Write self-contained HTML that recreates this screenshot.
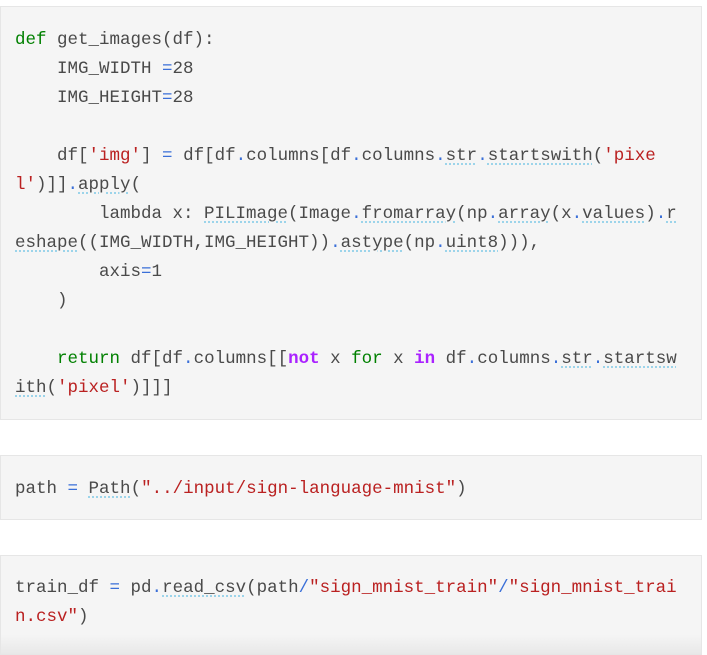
<!DOCTYPE html><html><head><style>
body{margin:0;background:#fff;width:707px;height:650px;overflow:hidden;position:relative;font-family:"Liberation Mono",monospace;}
.b{position:absolute;left:0;width:702px;background:#f5f5f5;border:1px solid #e6e6e6;box-sizing:border-box;}
.c{position:absolute;left:15px;font-size:17.5px;line-height:29px;color:#4a4a4a;white-space:pre;}
.k{color:#008000}.o{color:#3a6fd8}.s{color:#ba2121}.p{color:#aa22ff;font-weight:bold}
.u{text-decoration:underline dotted #8fd0e8;text-underline-offset:4px}
</style></head><body>
<div class="b" style="top:6px;height:414px"></div>
<div class="c" style="top:26px"><span class="k">def</span> get_images(df):
    IMG_WIDTH <span class="o">=</span>28
    IMG_HEIGHT<span class="o">=</span>28

    df[<span class="s">'img'</span>] <span class="o">=</span> df[df<span class="o">.</span>columns[df<span class="o">.</span>columns<span class="o">.</span><span class="u">str</span><span class="o">.</span><span class="u">startswith</span>(<span class="s">'pixe
l'</span>)]]<span class="o">.</span><span class="u">apply</span>(
        lambda x: <span class="u">PILImage</span>(Image<span class="o">.</span><span class="u">fromarray</span>(np<span class="o">.</span><span class="u">array</span>(x<span class="o">.</span><span class="u">values</span>)<span class="o">.</span><span class="u">r
eshape</span>((IMG_WIDTH,IMG_HEIGHT))<span class="o">.</span><span class="u">astype</span>(np<span class="o">.</span><span class="u">uint8</span>))),
        axis<span class="o">=</span>1
    )

    <span class="k">return</span> df[df<span class="o">.</span>columns[[<span class="p">not</span> x <span class="k">for</span> x <span class="p">in</span> df<span class="o">.</span>columns<span class="o">.</span><span class="u">str</span><span class="o">.</span><span class="u">startsw
ith</span>(<span class="s">'pixel'</span>)]]]</div>
<div class="b" style="top:455px;height:65px"></div>
<div class="c" style="top:475px">path <span class="o">=</span> <span class="u">Path</span>(<span class="s">"../input/sign-language-mnist"</span>)</div>
<div class="b" style="top:555px;height:100px;background:linear-gradient(#f5f5f5 80%,#e8e8e8)"></div>
<div class="c" style="top:574px">train_df <span class="o">=</span> pd<span class="o">.</span><span class="u">read_csv</span>(path<span class="o">/</span><span class="s">"sign_mnist_train"</span><span class="o">/</span><span class="s">"sign_mnist_trai
n.csv"</span>)</div>
</body></html>
